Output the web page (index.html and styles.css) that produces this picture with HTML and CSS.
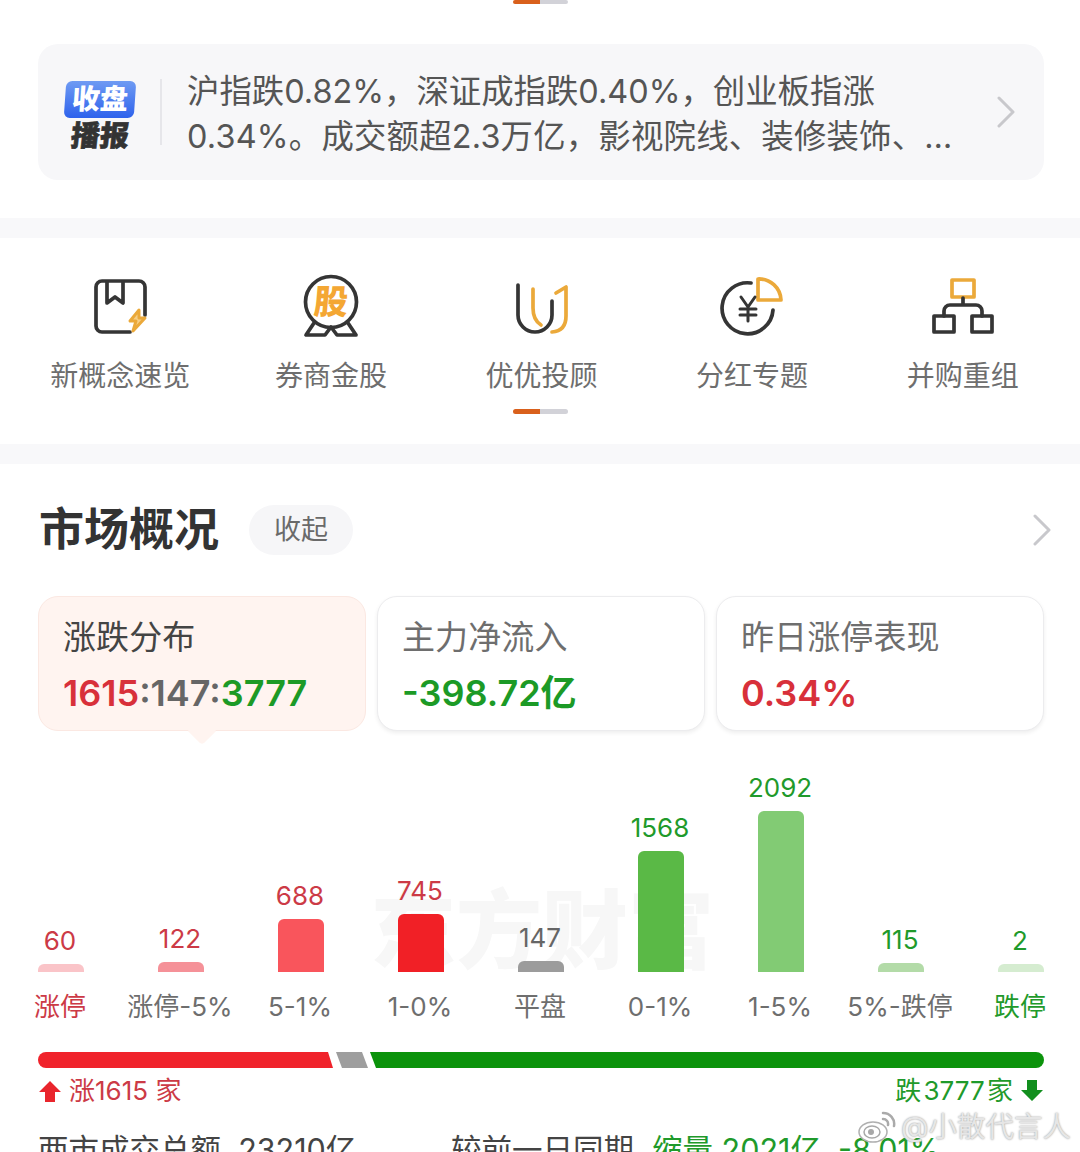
FILE: index.html
```html
<!DOCTYPE html>
<html lang="zh-CN">
<head>
<meta charset="utf-8">
<title>市场概况</title>
<link rel="stylesheet" href="styles.css">
</head>
<body>
<div class="page">
  <div class="dots dots-top"><span class="dot-on"></span><span class="dot-off"></span></div>

  <section class="news">
    <div class="news-logo">
      <div class="logo-top">收盘</div>
      <div class="logo-bottom">播报</div>
    </div>
    <div class="news-rule"></div>
    <div class="news-text">
      <div>沪指跌0.82%，深证成指跌0.40%，创业板指涨</div>
      <div class="news-line2">0.34%。成交额超2.3万亿，影视院线、装修装饰、…</div>
    </div>
    <svg class="chev" viewBox="0 0 20 32"><path d="M3 2 L17 16 L3 30"/></svg>
  </section>

  <div class="band"></div>

  <nav class="nav">
    <div class="nav-row">
      <div class="nav-item">
        <svg class="ico" viewBox="88 276 64 64">
          <path class="dk" d="M130 332 H102 a6 6 0 0 1-6-6 V287 a6 6 0 0 1 6-6 H139 a6 6 0 0 1 6 6 V315"/>
          <path class="dk" d="M107 282 V303 L115 297 L123 303 V282"/>
          <path class="or bolt" d="M139 310 L130 321 H136 L133 331 L145 318 H139 Z"/>
        </svg>
        <span>新概念速览</span>
      </div>
      <div class="nav-item">
        <svg class="ico" viewBox="299 276 64 64">
          <circle class="dk" cx="331" cy="302" r="25.500"/>
          <path class="dk" d="M314 323 L306 335 H325 L331 327 L337 335 H356 L348 323"/>
          <text class="gu" x="331" y="314">股</text>
        </svg>
        <span>券商金股</span>
      </div>
      <div class="nav-item">
        <svg class="ico" viewBox="509 276 64 64">
          <path class="or" d="M533 289 V308 Q533 320 541 325"/>
          <path class="or" d="M556 293 L566 287 V316 Q566 331 552 332"/>
          <path class="dk" d="M518 285 V315 a17 17 0 0 0 34 0 V301"/>
        </svg>
        <span>优优投顾</span>
      </div>
      <div class="nav-item">
        <svg class="ico" viewBox="720 276 64 64">
          <path class="dk" d="M751 283 A25.500 25.500 0 1 0 773 310"/>
          <path class="or" d="M758 279 V300 H781 A22 22 0 0 0 758 279 Z"/>
          <path class="dk thin" d="M741 297 L748 307 L755 297 M740 309 H756 M740 315 H756 M748 307 V321"/>
        </svg>
        <span>分红专题</span>
      </div>
      <div class="nav-item">
        <svg class="ico" viewBox="930 276 64 64">
          <rect class="or" x="951" y="280" width="22" height="17"/>
          <path class="dk" d="M962 298 V305 M943 316 V311 a6 6 0 0 1 6-6 H975 a6 6 0 0 1 6 6 V316"/>
          <rect class="dk" x="933" y="316" width="20" height="16"/>
          <rect class="dk" x="971" y="316" width="20" height="16"/>
        </svg>
        <span>并购重组</span>
      </div>
    </div>
    <div class="dots"><span class="dot-on"></span><span class="dot-off"></span></div>
  </nav>

  <div class="band"></div>

  <section class="market">
    <header class="head">
      <h2>市场概况</h2>
      <span class="pill">收起</span>
      <svg class="chev" viewBox="0 0 20 32"><path d="M3 2 L17 16 L3 30"/></svg>
    </header>

    <div class="cards">
      <div class="card card-on">
        <div class="card-title">涨跌分布</div>
        <div class="card-val"><span class="red">1615</span><span class="gray">:147:</span><span class="green">3777</span></div>
      </div>
      <div class="card">
        <div class="card-title">主力净流入</div>
        <div class="card-val green">-398.72亿</div>
      </div>
      <div class="card">
        <div class="card-title">昨日涨停表现</div>
        <div class="card-val red">0.34%</div>
      </div>
    </div>

    <div class="chart">
      <div class="wm">东方财富</div>
      <div class="col"><span class="num t-red">60</span><i class="bar b1" style="height:8px"></i><span class="lab t-red">涨停</span></div>
      <div class="col"><span class="num t-red">122</span><i class="bar b2" style="height:10px"></i><span class="lab">涨停-5%</span></div>
      <div class="col"><span class="num t-red">688</span><i class="bar b3" style="height:53px"></i><span class="lab">5-1%</span></div>
      <div class="col"><span class="num t-red">745</span><i class="bar b4" style="height:58px"></i><span class="lab">1-0%</span></div>
      <div class="col"><span class="num">147</span><i class="bar b5" style="height:11px"></i><span class="lab">平盘</span></div>
      <div class="col"><span class="num t-green">1568</span><i class="bar b6" style="height:121px"></i><span class="lab">0-1%</span></div>
      <div class="col"><span class="num t-green">2092</span><i class="bar b7" style="height:161px"></i><span class="lab">1-5%</span></div>
      <div class="col"><span class="num t-green">115</span><i class="bar b8" style="height:9px"></i><span class="lab">5%-跌停</span></div>
      <div class="col"><span class="num t-green">2</span><i class="bar b9" style="height:8px"></i><span class="lab t-green">跌停</span></div>
    </div>

    <div class="ratio">
      <i class="r-red"></i><i class="r-gray"></i><i class="r-green"></i>
    </div>

    <div class="legend">
      <div class="leg t-red">
        <svg class="arrow" viewBox="0 0 24 24"><path fill="#e9252c" d="M12 2 L23 13 H17 V23 H7 V13 H1 Z"/></svg>
        <span>涨1615 家</span>
      </div>
      <div class="leg leg-down t-green">
        <span>跌 3777 家</span>
        <svg class="arrow" viewBox="0 0 24 24"><path fill="#128f1e" d="M12 22 L23 11 H17 V1 H7 V11 H1 Z"/></svg>
      </div>
    </div>

    <div class="turnover">
      <span class="to-a">两市成交总额&nbsp; 23210亿</span>
      <span class="to-b">较前一日同期</span>
      <span class="to-c t-green">缩量 2021亿</span>
      <span class="to-d t-green">-8.01%</span>
    </div>
  </section>

  <div class="weibo">
    <svg class="weibo-logo" viewBox="0 0 38 32">
      <ellipse cx="15" cy="21" rx="14" ry="10" fill="#fff" stroke="#b0b0b0" stroke-width="1.500"/>
      <ellipse cx="14" cy="21" rx="8" ry="6" fill="none" stroke="#a8a8a8" stroke-width="1.500"/>
      <circle cx="13" cy="21" r="3" fill="#a8a8a8"/>
      <path d="M25 2 A11 11 0 0 1 36 15 M25 8 A5 5 0 0 1 30 14" fill="none" stroke="#aaaaaa" stroke-width="2.500" stroke-linecap="round"/>
    </svg>
    <span>@小散代言人</span>
  </div>
</div>
</body>
</html>
```

FILE: styles.css
```css
* { box-sizing: border-box; }
html, body { margin: 0; padding: 0; background: #fff; }
body { font-family: Inter, "Noto Sans CJK SC", sans-serif; color: #333; }
.page { position: relative; width: 1080px; height: 1152px; overflow: hidden; background: #fff; }

.dots { display: flex; justify-content: center; height: 5px; }
.dots-top { height: 4px; }
.dot-on { width: 27px; background: #d9601c; border-radius: 3px 0 0 3px; }
.dot-off { width: 28px; background: #d2d2d8; border-radius: 0 3px 3px 0; }

.news { display: flex; align-items: center; height: 136px; margin: 40px 36px 38px 38px; padding: 0 28px 0 26px; background: #f7f7f9; border-radius: 20px; }
.news-logo { width: 72px; padding-top: 10px; display: flex; flex-direction: column; align-items: center; }
.logo-top { width: 70px; height: 37px; line-height: 36px; text-align: center; color: #fff; font-size: 28px; font-weight: 900; border-radius: 6px; background: linear-gradient(#6f9bf3, #2e62ec); transform: skewX(-4deg); }
.logo-bottom { margin-top: 1px; height: 35px; line-height: 34px; font-size: 29px; font-weight: 900; color: #333; transform: skewX(-6deg); -webkit-text-stroke: .6px #333; }
.news-rule { width: 2px; height: 66px; margin: 0 25px 0 24px; background: #e6e6ea; }
.news-text { flex: 1; padding-top: 3px; font-size: 32.4px; line-height: 45px; color: #555; white-space: nowrap; }
.news-line2 { letter-spacing: .2px; }
.chev { width: 20px; height: 32px; flex: none; }
.chev path { fill: none; stroke: #c8c8cc; stroke-width: 3; stroke-linecap: round; stroke-linejoin: round; }

.band { height: 20px; background: #f8f8fa; }

.nav { height: 206px; padding-top: 38px; }
.nav-row { display: flex; padding: 0 12px 0 15px; height: 133px; }
.nav-item { flex: 1; display: flex; flex-direction: column; align-items: center; font-size: 28px; line-height: 40px; color: #6e6e6e; }
.ico { width: 64px; height: 64px; flex: none; margin-bottom: 40px; overflow: visible; }
.nav-item span { margin-top: -24px; white-space: nowrap; }
.dk { fill: none; stroke: #353535; stroke-width: 3.700; stroke-linecap: round; stroke-linejoin: round; }
.or { fill: none; stroke: #eba93a; stroke-width: 3.700; stroke-linecap: round; stroke-linejoin: round; }
.thin { stroke-width: 3; }
.bolt { fill: #f6cf86; stroke-width: 3; }
.gu { font-family: "Noto Sans CJK SC", sans-serif; font-size: 34px; font-weight: 900; fill: #f4a733; text-anchor: middle; transform: skewX(-5deg); transform-origin: 331px 302px; }

.market { position: relative; }
.head { display: flex; align-items: center; height: 132px; padding: 0 28px 0 39px; }
.head h2 { margin: 0; font-size: 45px; line-height: 60px; font-weight: 700; color: #333; white-space: nowrap; }
.pill { width: 104px; height: 50px; margin-left: 30px; line-height: 50px; text-align: center; font-size: 27px; color: #6a6a6a; background: #f6f6f8; border-radius: 25px; }
.head .chev { margin-left: auto; }

.cards { display: flex; gap: 11px; padding: 0 36px 0 38px; }
.card { position: relative; flex: 1; height: 135px; padding: 17px 24px 0 24px; background: #fff; border: 1px solid #ececee; border-radius: 20px; box-shadow: 0 2px 4px rgba(0,0,0,.07); }
.card-on { background: #fff4f0; border-color: #fbe8e2; box-shadow: none; }
.card-on::after { content: ""; position: absolute; left: 153px; bottom: -11px; width: 20px; height: 20px; background: #fff4f0; transform: rotate(45deg); border-radius: 0 0 4px 0; }
.card-title { font-size: 33px; line-height: 46px; color: #6e6e6e; letter-spacing: .1px; white-space: nowrap; }
.card-on .card-title { color: #444; }
.card-val { margin-top: 11px; font-size: 36px; line-height: 44px; font-weight: 600; white-space: nowrap; }
.red { color: #d8303a; }
.gray { color: #666; }
.green { color: #1c9a26; }

.chart { position: relative; display: flex; align-items: flex-end; height: 256px; margin-top: 39px; padding-left: 1px; }
.wm { position: absolute; left: 370px; top: 110px; font-family: "Noto Sans CJK SC", sans-serif; font-size: 86px; line-height: 90px; font-weight: 900; color: #f7f7f7; white-space: nowrap; }
.col { position: relative; flex: 0 0 120px; display: flex; flex-direction: column; align-items: center; }
.num { font-size: 26px; line-height: 30px; margin: 0 2px 8px 0; color: #666; }
.bar { display: block; width: 46px; border-radius: 6px 6px 0 0; }
.lab { margin: 17px 2px 0 0; font-size: 26px; line-height: 36px; height: 37px; color: #6e6e6e; white-space: nowrap; }
.b1 { background: #fac4c8; } .b2 { background: #f59198; } .b3 { background: #f9555c; } .b4 { background: #f12026; }
.b5 { background: #9c9c9c; } .b6 { background: #5ab946; } .b7 { background: #82cb74; } .b8 { background: #b3dba8; } .b9 { background: #d5ecd0; }
.t-red { color: #cc3a46; }
.t-green { color: #1f9a2b; }

.ratio { display: flex; height: 16px; margin: 26px 36px 0 38px; }
.ratio i { display: block; height: 16px; }
.r-red { width: 295px; background: #f0232b; border-radius: 8px 0 0 8px; clip-path: polygon(0 0, 290px 0, 100% 100%, 0 100%); }
.r-gray { width: 32px; margin-left: 3px; background: #9e9e9e; clip-path: polygon(0 0, 26px 0, 100% 100%, 6px 100%); }
.r-green { flex: 1; margin-left: 2px; background: #0b930b; border-radius: 0 8px 8px 0; clip-path: polygon(0 0, 100% 0, 100% 100%, 6px 100%); }

.legend { display: flex; justify-content: space-between; height: 46px; padding: 0 36px 0 38px; font-size: 26px; line-height: 46px; }
.leg { display: flex; align-items: center; gap: 7px; }
.leg-down { word-spacing: -5px; }
.arrow { width: 24px; height: 24px; flex: none; }

.turnover { position: relative; display: flex; height: 44px; margin-top: 14px; padding-left: 38px; font-size: 30.5px; line-height: 44px; color: #444; white-space: nowrap; }
.to-a { width: 413px; }
.to-b { width: 201px; }
.to-c { width: 186px; }

.weibo { position: absolute; left: 858px; top: 1107px; display: flex; align-items: center; gap: 5px; font-size: 28.5px; line-height: 40px; color: #e6e6e6; text-shadow: 0 0 2px #8f8f8f; white-space: nowrap; }
.weibo-logo { width: 38px; height: 32px; flex: none; }
```
